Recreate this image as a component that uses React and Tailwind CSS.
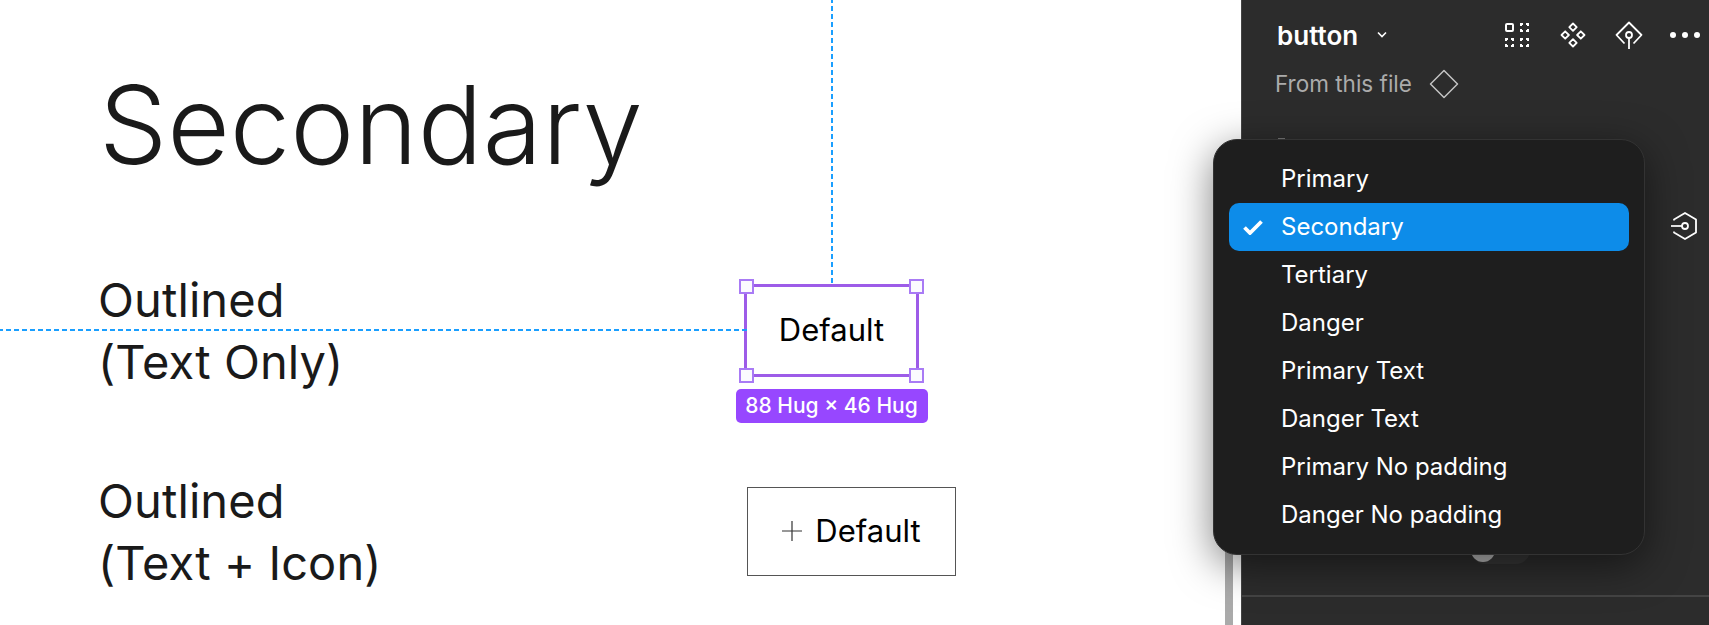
const options = ['Primary', 'Secondary', 'Tertiary', 'Danger', 'Primary Text', 'Danger Text', 'Primary No padding', 'Danger No padding'];

function Handle({ className }) {
  return <span className={`absolute w-[15px] h-[15px] bg-[#fbfbfe] border-2 border-[#a97bf5] ${className}`} />;
}

function RowLabel({ top, second }) {
  return (
    <div className="-ml-[1px] w-[646px] shrink-0 translate-y-[1px] text-[47px] leading-[62px] tracking-[0.1px] text-[#1a1a1a]">
      <div>{top}</div>
      <div>{second}</div>
    </div>
  );
}

// dashed square of the "create component set" icon
function DashedSquare({ x, y }) {
  return (
    <path d={`M${x} ${y + 2}V${y}h2M${x + 5} ${y}h2v2M${x + 7} ${y + 5}v2h-2M${x + 2} ${y + 7}H${x}v-2`} />
  );
}

export default function App() {
  return (
    <div className="relative flex w-[1709px] h-[625px] overflow-hidden bg-white font-['Inter',sans-serif]">
      {/* canvas */}
      <div className="relative flex-1 pt-[57px] pl-[99px]">
        <h1 className="h-[136px] text-[108px] leading-[136px] font-light text-[#1a1a1a]">Secondary</h1>

        <div className="flex items-center mt-[75px]">
          <RowLabel top="Outlined" second="(Text Only)" />
          <div className="relative w-[175px] h-[93px] shrink-0 border-[3px] border-[#9d5ce8] flex items-center justify-center text-[31px] text-black">
            Default
            <div className="absolute bottom-full mb-[4px] left-1/2 -ml-[1px] w-[2px] h-[290px] bg-[repeating-linear-gradient(0deg,#1a9fff_0_5px,transparent_5px_8px)]" />
            <div className="absolute right-full top-1/2 -mt-[1px] w-[750px] h-[2px] bg-[repeating-linear-gradient(270deg,#1a9fff_0_5px,transparent_5px_8px)]" />
            <Handle className="-left-[8px] -top-[8px]" />
            <Handle className="-right-[8px] -top-[8px]" />
            <Handle className="-left-[8px] -bottom-[9px]" />
            <Handle className="-right-[8px] -bottom-[9px]" />
            <div className="absolute top-full mt-[15px] left-1/2 -translate-x-1/2 w-[192px] h-[34px] rounded-[5px] bg-[#9747ff] text-white text-[21px] font-medium flex items-center justify-center whitespace-nowrap">
              88 Hug × 46 Hug
            </div>
          </div>
        </div>

        <div className="flex items-center mt-[77px]">
          <RowLabel top="Outlined" second="(Text + Icon)" />
          <div className="ml-[3px] w-[209px] h-[89px] shrink-0 border border-[#555] flex items-center justify-center gap-[13px] text-[31px] text-black">
            <svg width="20" height="20" viewBox="0 0 20 20" fill="none" stroke="#333" strokeWidth="1.2"><path d="M10 0v20M0 10h20" /></svg>
            Default
          </div>
        </div>

        {/* edge of the next frame */}
        <div className="absolute right-[8px] top-[500px] bottom-0 w-[8px] bg-[#aaaaaa]" />
      </div>

      {/* right panel */}
      <div className="flex flex-col w-[468px] shrink-0 bg-[#2c2c2c] border-l border-[#444] text-white">
        <div className="flex items-center h-[70px] pl-[35px] pr-[9px]">
          <span className="text-[26px] font-semibold">button</span>
          <svg className="ml-[18px]" width="12" height="8" viewBox="0 0 12 8" fill="none" stroke="white" strokeWidth="1.6"><path d="M2 1.500l4 4 4-4" /></svg>
          <svg className="ml-auto" width="24" height="24" viewBox="0 0 24 24" fill="none" stroke="white" strokeWidth="2">
            <rect x="1" y="1" width="7" height="7" rx="1" />
            <DashedSquare x={16} y={1} />
            <DashedSquare x={1} y={16} />
            <DashedSquare x={16} y={16} />
          </svg>
          <svg className="ml-[31px]" width="26" height="26" viewBox="0 0 26 26" fill="none" stroke="white" strokeWidth="1.8" strokeLinejoin="round">
            <path d="M13 1.500l3.700 3.700L13 8.900 9.300 5.200zM13 17.100l3.700 3.700-3.700 3.700-3.700-3.700zM5.200 9.300L8.900 13l-3.700 3.700L1.500 13zM20.800 9.300l3.700 3.700-3.700 3.700-3.700-3.700z" />
          </svg>
          <svg className="ml-[29px]" width="28" height="28" viewBox="0 0 28 28" fill="none" stroke="white" strokeWidth="1.8" strokeLinejoin="round">
            <path d="M9.500 22.500L1.500 14 14 1.500 26.500 14l-8 8.500" />
            <circle cx="14" cy="14" r="3" />
            <path d="M14 17v11" />
          </svg>
          <svg className="ml-[27px]" width="30" height="6" viewBox="0 0 30 6" fill="white">
            <circle cx="3" cy="3" r="3" /><circle cx="15" cy="3" r="3" /><circle cx="27" cy="3" r="3" />
          </svg>
        </div>
        <div className="flex items-center pl-[33px] h-[30px] -mt-[1px]">
          <span className="text-[22.5px] text-[#ababab]">From this file</span>
          <svg className="ml-[17px]" width="30" height="30" viewBox="0 0 30 30" fill="none" stroke="#c4c4c4" strokeWidth="1.5"><path d="M15 1.500L28.500 15 15 28.500 1.500 15z" strokeLinejoin="round" /></svg>
        </div>

        <div className="ml-[36px] mt-[39px] w-[7px] h-[1px] bg-[#777]" />

        {/* property rows, mostly under the dropdown */}
        <div className="flex justify-end pr-[10px] mt-[72px]">
          <svg width="28" height="30" viewBox="0 0 28 30" fill="none" stroke="white" strokeWidth="1.8" strokeLinejoin="round">
            <path d="M3 9.500V8.500L14 2l11 6.500v13L14 28 3 21.500V20.500" />
            <circle cx="14" cy="15" r="3" />
            <path d="M0 15h11" />
          </svg>
        </div>
        <div className="ml-[229px] mt-[306px] w-[59px] h-[17px] rounded-b-[14px] bg-[#363636] shrink-0">
          <div className="w-[24px] h-[15px] rounded-b-[12px] bg-[#b5b5b5]" />
        </div>
        <div className="mt-[31px] border-t-2 border-[#444]" />
      </div>

      {/* dropdown */}
      <div className="absolute left-[1213px] top-[139px] w-[432px] h-[416px] rounded-[24px] bg-[#1e1e1e] border border-[#333] px-[15px] pt-[15px] shadow-[0_10px_40px_rgba(0,0,0,0.5)]">
        {options.map(option => (
          <div
            key={option}
            className={`relative flex items-center h-[48px] pl-[52px] rounded-[10px] text-[24px] text-white ${option === 'Secondary' ? 'bg-[#0d8ce9]' : ''}`}
          >
            {option === 'Secondary' && (
              <svg className="absolute left-[14px]" width="20" height="16" viewBox="0 0 20 16" fill="none" stroke="white" strokeWidth="3.8">
                <path d="M1.500 8.500L7 14 18.500 2.500" />
              </svg>
            )}
            {option}
          </div>
        ))}
      </div>
    </div>
  );
}
